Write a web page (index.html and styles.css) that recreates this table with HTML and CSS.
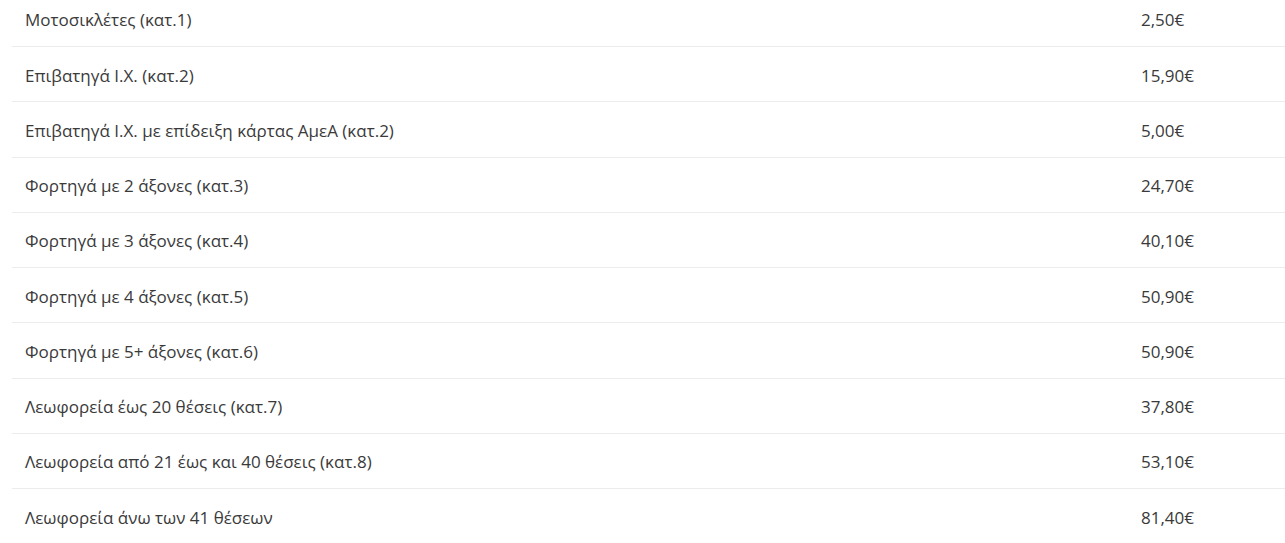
FILE: index.html
```html
<!DOCTYPE html>
<html lang="el">
<head>
<meta charset="utf-8">
<title>Διόδια</title>
<link rel="stylesheet" href="styles.css">
</head>
<body>
<div class="toll-list">
  <div class="row"><span class="cat">Μοτοσικλέτες (κατ.1)</span><span class="price">2,50€</span></div>
  <div class="row"><span class="cat">Επιβατηγά Ι.Χ. (κατ.2)</span><span class="price">15,90€</span></div>
  <div class="row"><span class="cat">Επιβατηγά Ι.Χ. με επίδειξη κάρτας ΑμεΑ (κατ.2)</span><span class="price">5,00€</span></div>
  <div class="row"><span class="cat">Φορτηγά με 2 άξονες (κατ.3)</span><span class="price">24,70€</span></div>
  <div class="row"><span class="cat">Φορτηγά με 3 άξονες (κατ.4)</span><span class="price">40,10€</span></div>
  <div class="row"><span class="cat">Φορτηγά με 4 άξονες (κατ.5)</span><span class="price">50,90€</span></div>
  <div class="row"><span class="cat">Φορτηγά με 5+ άξονες (κατ.6)</span><span class="price">50,90€</span></div>
  <div class="row"><span class="cat">Λεωφορεία έως 20 θέσεις (κατ.7)</span><span class="price">37,80€</span></div>
  <div class="row"><span class="cat">Λεωφορεία από 21 έως και 40 θέσεις (κατ.8)</span><span class="price">53,10€</span></div>
  <div class="row"><span class="cat">Λεωφορεία άνω των 41 θέσεων</span><span class="price">81,40€</span></div>
</div>
</body>
</html>
```
FILE: styles.css
```css
html, body {
  margin: 0;
  padding: 0;
  background: #ffffff;
}
body {
  font-family: "Open Sans", "Noto Sans", "DejaVu Sans", sans-serif;
  font-size: 17px;
  color: #3a3a3a;
  overflow: hidden;
}
.toll-list {
  margin-top: -8.25px;
  padding-left: 12px;
}
.row {
  box-sizing: border-box;
  height: 55.25px;
  display: grid;
  grid-template-columns: 1fr 144px;
  align-items: center;
  padding-left: 13px;
  padding-top: 2px;
  border-bottom: 1px solid #ececec;
}
.row:last-child {
  border-bottom: none;
}
.cat, .price {
  white-space: nowrap;
}
```
